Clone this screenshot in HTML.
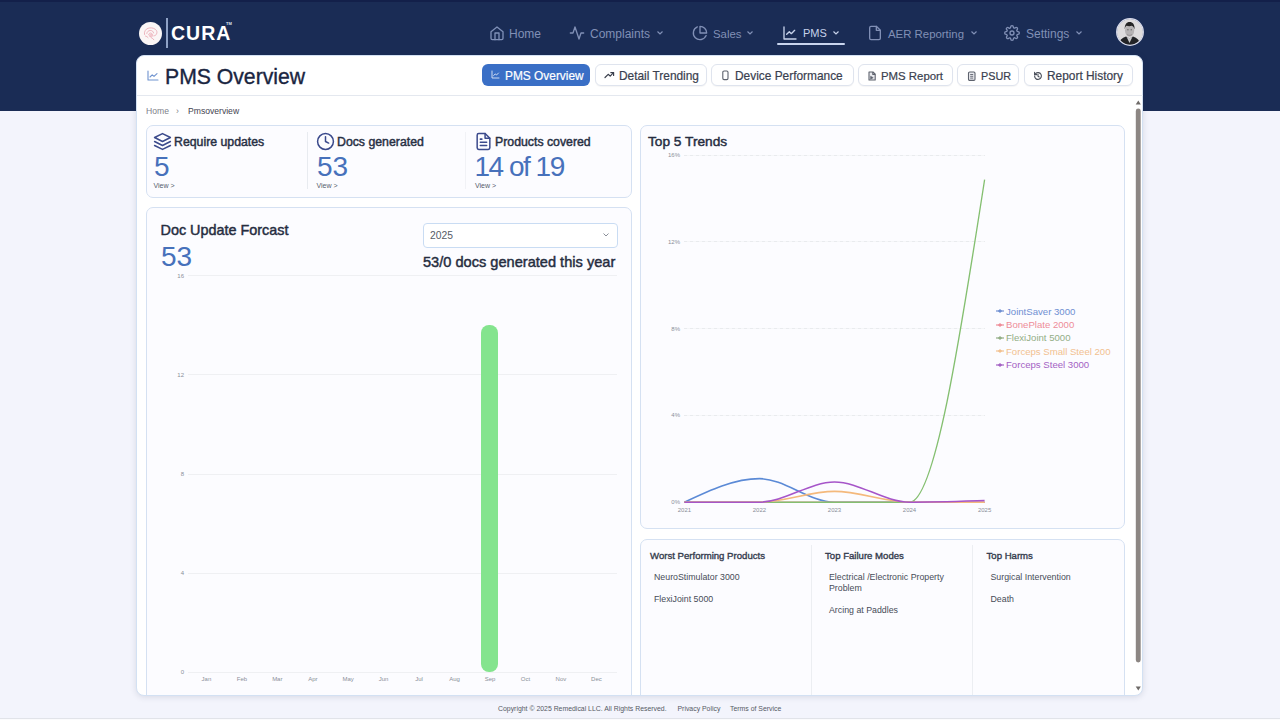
<!DOCTYPE html>
<html><head><meta charset="utf-8">
<style>
*{box-sizing:border-box;margin:0;padding:0}
html,body{width:1280px;height:720px;overflow:hidden}
body{background:#f3f4fc;font-family:"Liberation Sans",sans-serif;position:relative}
.a{position:absolute}
.t{position:absolute;white-space:nowrap;line-height:1}
#band{left:0;top:0;width:1280px;height:111px;background:#1a2c55;border-top:2px solid #13204a}
.nav{color:#8190b6;font-size:12px}
.nav svg{position:absolute}
#card{left:136px;top:55px;width:1007px;height:641px;background:#fff;border-radius:8px;border:1px solid #d3e1f3;box-shadow:0 1px 6px rgba(30,40,70,.13)}
.tab{position:absolute;top:64px;height:22px;border:1px solid #dfe4ee;border-radius:6px;background:#fff;box-shadow:0 1px 1px rgba(0,0,0,.04)}
.tabt{font-size:11.9px;color:#3b4150;margin-top:1.8px;-webkit-text-stroke:0.2px #383e4d}
.box{position:absolute;background:#fcfcff;border:1px solid #d5e1f2;border-radius:7px}
.lbl{font-size:12.3px;color:#283044;-webkit-text-stroke:0.45px #283044}
.big{font-size:28px;color:#4771bb}
.view{font-size:7px;color:#555d6e}
.ax{font-size:6px;color:#8a8f99}
.grid{position:absolute;height:1px;background:#eff0f3}
.dgrid{position:absolute;height:1px;background:repeating-linear-gradient(90deg,#e9ebee 0 3px,#f5f6f8 3px 6px)}
.leg{font-size:9.6px}
.bt{font-size:8.8px;color:#474c58}
.bh{font-size:9.6px;color:#343b4d;-webkit-text-stroke:0.35px #343b4d}
</style></head>
<body>
<div id="band" class="a"></div>

<!-- logo -->
<div class="a" style="left:139px;top:22px;width:23px;height:23px;border-radius:50%;background:#fbf6f6"></div>
<svg class="a" style="left:139px;top:22px" width="23" height="23" viewBox="0 0 23 23">
 <g fill="none" stroke="#eaa3ae" stroke-width="0.8" stroke-linecap="round">
  <path d="M5.5 12.5c-.6-2.8 1-5.4 3.6-6.2 2.4-.8 5.2-.5 7.2 1 1.6 1.2 2 3 1.3 4.6-.5 1.2-1.6 1.8-2.7 2"/>
  <path d="M7.8 11.5c.2-1.8 1.6-2.9 3.4-3 1.8-.1 3.2.9 3.4 2.4"/>
  <path d="M9.6 12.4c.4-1 1.3-1.5 2.3-1.3 1 .2 1.5 1 1.4 1.9"/>
  <path d="M6.5 14c1 .2 2 .8 2.6 1.6"/>
  <path d="M11 14c.6 1.2 1.6 2.2 2.8 2.6l1 1.2"/>
 </g>
 <ellipse cx="12" cy="13.5" rx="2.2" ry="1.8" fill="#f0b8c0" opacity="0.7"/>
</svg>
<div class="a" style="left:166px;top:18px;width:2px;height:30px;background:#8fa2c6"></div>
<div class="t" style="left:171px;top:24px;font-size:19.5px;font-weight:bold;color:#fff;letter-spacing:1px">CURA</div>
<div class="t" style="left:226px;top:22px;font-size:4px;font-weight:bold;color:#dfe6f2">TM</div>

<!-- nav -->
<svg class="a" style="left:489px;top:25px" width="16" height="16" viewBox="0 0 24 24" fill="none" stroke="#7f90b8" stroke-width="2" stroke-linecap="round" stroke-linejoin="round"><path d="M3 10l9-7 9 7v10a2 2 0 0 1-2 2H5a2 2 0 0 1-2-2z"/><path d="M9 22V12h6v10"/></svg>
<div class="t nav" style="left:509px;top:28px">Home</div>

<svg class="a" style="left:569px;top:25px" width="16" height="16" viewBox="0 0 24 24" fill="none" stroke="#8190b6" stroke-width="2" stroke-linecap="round" stroke-linejoin="round"><path d="M22 12h-4l-3 9L9 3l-3 9H2"/></svg>
<div class="t nav" style="left:590px;top:28px">Complaints</div>
<svg class="a" style="left:656px;top:30px" width="8" height="6" viewBox="0 0 8 6" fill="none" stroke="#8190b6" stroke-width="1.2"><path d="M1.5 1.5L4 4l2.5-2.5"/></svg>

<svg class="a" style="left:692px;top:25px" width="16" height="16" viewBox="0 0 24 24" fill="none" stroke="#8190b6" stroke-width="2" stroke-linecap="round" stroke-linejoin="round"><path d="M21.2 15.9A10 10 0 1 1 8 2.8"/><path d="M22 12A10 10 0 0 0 12 2v10z"/></svg>
<div class="t nav" style="left:713px;top:28px;font-size:11.4px;top:28.5px">Sales</div>
<svg class="a" style="left:746px;top:30px" width="8" height="6" viewBox="0 0 8 6" fill="none" stroke="#8190b6" stroke-width="1.2"><path d="M1.5 1.5L4 4l2.5-2.5"/></svg>

<svg class="a" style="left:782px;top:25px" width="16" height="16" viewBox="0 0 24 24" fill="none" stroke="#c7d2ea" stroke-width="2" stroke-linecap="round" stroke-linejoin="round"><path d="M3 3v18h18"/><path d="M7 14l4-4 3 3 5-5"/></svg>
<div class="t nav" style="left:803px;top:28px;color:#c7d2ea;font-size:11px">PMS</div>
<svg class="a" style="left:832px;top:30px" width="8" height="6" viewBox="0 0 8 6" fill="none" stroke="#c7d2ea" stroke-width="1.2"><path d="M1.5 1.5L4 4l2.5-2.5"/></svg>
<div class="a" style="left:777px;top:43px;width:68px;height:2px;background:#c9d5ee;border-radius:1px"></div>

<svg class="a" style="left:867px;top:25px" width="16" height="16" viewBox="0 0 24 24" fill="none" stroke="#8190b6" stroke-width="2" stroke-linecap="round" stroke-linejoin="round"><path d="M14 2H6a2 2 0 0 0-2 2v16a2 2 0 0 0 2 2h12a2 2 0 0 0 2-2V8z"/><path d="M14 2v6h6"/></svg>
<div class="t nav" style="left:888px;top:28px;font-size:11.4px;top:28.5px">AER Reporting</div>
<svg class="a" style="left:970px;top:30px" width="8" height="6" viewBox="0 0 8 6" fill="none" stroke="#8190b6" stroke-width="1.2"><path d="M1.5 1.5L4 4l2.5-2.5"/></svg>

<svg class="a" style="left:1004px;top:25px" width="16" height="16" viewBox="0 0 24 24" fill="none" stroke="#8190b6" stroke-width="2" stroke-linecap="round" stroke-linejoin="round"><circle cx="12" cy="12" r="3"/><path d="M19.4 15a1.65 1.65 0 0 0 .33 1.82l.06.06a2 2 0 1 1-2.83 2.83l-.06-.06a1.65 1.65 0 0 0-1.82-.33 1.65 1.65 0 0 0-1 1.51V21a2 2 0 1 1-4 0v-.09A1.65 1.65 0 0 0 9 19.4a1.65 1.65 0 0 0-1.82.33l-.06.06a2 2 0 1 1-2.83-2.83l.06-.06A1.65 1.65 0 0 0 4.6 15a1.65 1.65 0 0 0-1.51-1H3a2 2 0 1 1 0-4h.09A1.65 1.65 0 0 0 4.6 9a1.65 1.65 0 0 0-.33-1.82l-.06-.06a2 2 0 1 1 2.83-2.83l.06.06A1.65 1.65 0 0 0 9 4.6a1.65 1.65 0 0 0 1-1.51V3a2 2 0 1 1 4 0v.09a1.65 1.65 0 0 0 1 1.51 1.65 1.65 0 0 0 1.82-.33l.06-.06a2 2 0 1 1 2.83 2.83l-.06.06A1.65 1.65 0 0 0 19.4 9a1.65 1.65 0 0 0 1.51 1H21a2 2 0 1 1 0 4h-.09a1.65 1.65 0 0 0-1.51 1z"/></svg>
<div class="t nav" style="left:1026px;top:28px">Settings</div>
<svg class="a" style="left:1075px;top:30px" width="8" height="6" viewBox="0 0 8 6" fill="none" stroke="#8190b6" stroke-width="1.2"><path d="M1.5 1.5L4 4l2.5-2.5"/></svg>

<!-- avatar -->
<svg class="a" style="left:1116px;top:17.5px" width="28" height="28" viewBox="0 0 28 28">
 <defs><clipPath id="av"><circle cx="14" cy="14" r="13"/></clipPath></defs>
 <g clip-path="url(#av)">
  <rect width="28" height="28" fill="#dedcdd"/>
  <path d="M2 28c1-5 3.5-8 8-9.5l3.5 2 3.5-2c4.5 1.5 7 4.5 8 9.5z" fill="#222326"/>
  <path d="M10.5 18.7l3 6.3 3-6.3-3 1.5z" fill="#c9c9cb"/>
  <ellipse cx="13.6" cy="12.6" rx="4.6" ry="6.2" fill="#b6b3b4"/>
  <path d="M11 16.5c1.5 1.2 3.5 1.2 5 0" stroke="#8d898a" stroke-width="0.8" fill="none"/>
  <ellipse cx="11.9" cy="11.8" rx="0.8" ry="0.5" fill="#555"/>
  <ellipse cx="15.3" cy="11.8" rx="0.8" ry="0.5" fill="#555"/>
  <path d="M8.8 11.5c-.4-5 1.8-7.6 4.8-7.6s5.4 2.4 4.9 7.6c-.6-2.2-1.4-3.4-2.6-3.7-1.8.6-3.6.6-5.2 0-1.2.4-1.6 1.6-1.9 3.7z" fill="#242424"/>
 </g>
 <circle cx="14" cy="14" r="13.3" fill="none" stroke="#d9dcec" stroke-width="1.3"/>
</svg>

<!-- main card -->
<div id="card" class="a"></div>
<svg class="a" style="left:147px;top:70px" width="12" height="11" viewBox="0 0 12 11" fill="none" stroke="#6f93cf" stroke-width="1.1" stroke-linecap="round" stroke-linejoin="round"><path d="M1 1v9h10"/><path d="M3 7l2.2-2.2 1.8 1.6L10 3.6"/></svg>
<div class="t" style="left:165px;top:66px;font-size:21.2px;color:#1a2541;-webkit-text-stroke:0.35px #1a2541">PMS Overview</div>

<!-- tabs -->
<div class="a" style="left:482px;top:64px;width:108px;height:22px;background:#3a6fc6;border-radius:6px"></div>
<svg class="a" style="left:491px;top:70px" width="9" height="9" viewBox="0 0 9 9" fill="none" stroke="#dfe8f7" stroke-width="0.9" stroke-linecap="round"><path d="M1 1v7h7"/><path d="M2.6 5.5l1.6-1.5 1.3 1L7.5 3"/></svg>
<div class="t tabt" style="left:505px;top:68.8px;color:#fff;-webkit-text-stroke:0.2px #fff">PMS Overview</div>

<div class="tab" style="left:595px;width:112px"></div>
<svg class="a" style="left:604px;top:71px" width="11" height="8" viewBox="0 0 11 8" fill="none" stroke="#3a3f4c" stroke-width="1.2" stroke-linecap="round" stroke-linejoin="round"><path d="M1 6.5l3.2-3.2 2 1.8 3.3-3.4"/><path d="M6.8 1.6h2.8v2.8"/></svg>
<div class="t tabt" style="left:619px;top:69px">Detail Trending</div>

<div class="tab" style="left:711px;width:143px"></div>
<svg class="a" style="left:721px;top:70px" width="9" height="11" viewBox="0 0 9 11" fill="none" stroke="#5d626d" stroke-width="1.1"><rect x="1.8" y="1" width="5.2" height="8.6" rx="1.3"/></svg>
<div class="t tabt" style="left:735px;top:69px">Device Performance</div>

<div class="tab" style="left:858px;width:95px"></div>
<svg class="a" style="left:867px;top:70.5px" width="10" height="10" viewBox="0 0 10 10" fill="none" stroke="#5d626d" stroke-width="1.1" stroke-linejoin="round"><path d="M2 1h4l2.2 2.2V9H2z" fill="#e9eaee"/><path d="M5.8 1v2.4h2.4"/><path d="M3.6 5.2l2.6 1.5-2.6 1.5z" fill="#5d626d" stroke-width="0.6"/></svg>
<div class="t tabt" style="left:881px;top:69px;font-size:11.4px;top:69.4px">PMS Report</div>

<div class="tab" style="left:957px;width:62px"></div>
<svg class="a" style="left:967px;top:70.5px" width="10" height="10" viewBox="0 0 10 10" fill="none" stroke="#5d626d" stroke-width="1.1"><rect x="1.5" y="1" width="6.5" height="8.4" rx="1.2" fill="#e9eaee"/><path d="M3.2 3.5h3M3.2 5.3h3M3.2 7.1h3" stroke-width="0.9"/></svg>
<div class="t tabt" style="left:981px;font-size:10.8px;top:68.8px">PSUR</div>

<div class="tab" style="left:1024px;width:109px"></div>
<svg class="a" style="left:1033px;top:71px" width="10" height="10" viewBox="0 0 10 10" fill="none" stroke="#4a4f5a" stroke-width="1.1" stroke-linecap="round" stroke-linejoin="round"><path d="M1.6 5a3.4 3.4 0 1 0 1-2.4L1.6 3.6"/><path d="M1.6 1.4v2.2h2.2"/><path d="M5 3.4V5.2l1.2 .7"/></svg>
<div class="t tabt" style="left:1047px;top:69px">Report History</div>

<div class="a" style="left:137px;top:95px;width:1006px;height:1px;background:#e4e8ef"></div>

<!-- breadcrumb -->
<div class="t" style="left:146px;top:107px;font-size:8.6px;color:#7d818a">Home</div>
<div class="t" style="left:176px;top:107px;font-size:8.6px;color:#7d818a">&#8250;</div>
<div class="t" style="left:188px;top:107px;font-size:8.6px;color:#3f4350">Pmsoverview</div>


<!-- scroll area -->
<div class="a" style="left:137px;top:96px;width:1006px;height:599px;overflow:hidden;border-radius:0 0 8px 8px">
<div class="a" style="left:-137px;top:-96px;width:1280px;height:720px">

<!-- stats box -->
<div class="box" style="left:146px;top:125px;width:486px;height:73px"></div>
<div class="a" style="left:307px;top:132px;width:1px;height:57px;background:#e8ebf0"></div>
<div class="a" style="left:465px;top:132px;width:1px;height:57px;background:#f1f2f6"></div>

<svg class="a" style="left:153px;top:132px" width="19" height="19" viewBox="0 0 24 24" fill="none" stroke="#3b4a8c" stroke-width="1.9" stroke-linecap="round" stroke-linejoin="round"><path d="M12 2L2 7l10 5 10-5z"/><path d="M2 17l10 5 10-5"/><path d="M2 12l10 5 10-5"/></svg>
<div class="t lbl" style="left:174px;top:135.5px">Require updates</div>
<div class="t big" style="left:154px;top:153px">5</div>
<div class="t view" style="left:153.5px;top:182px">View &gt;</div>

<svg class="a" style="left:316px;top:132px" width="19" height="19" viewBox="0 0 24 24" fill="none" stroke="#3b4a8c" stroke-width="1.9" stroke-linecap="round" stroke-linejoin="round"><circle cx="12" cy="12" r="10"/><path d="M12 6v6l4 2"/></svg>
<div class="t lbl" style="left:337px;top:135.5px">Docs generated</div>
<div class="t big" style="left:317px;top:153px">53</div>
<div class="t view" style="left:316.5px;top:182px">View &gt;</div>

<svg class="a" style="left:474px;top:132px" width="19" height="19" viewBox="0 0 24 24" fill="none" stroke="#3b4a8c" stroke-width="1.9" stroke-linecap="round" stroke-linejoin="round"><path d="M14 2H6a2 2 0 0 0-2 2v16a2 2 0 0 0 2 2h12a2 2 0 0 0 2-2V8z"/><path d="M14 2v6h6"/><path d="M16 13H8M16 17H8M10 9H8"/></svg>
<div class="t lbl" style="left:495px;top:135.5px">Products covered</div>
<div class="t big" style="left:474.5px;top:153px;letter-spacing:-1.5px">14 of 19</div>
<div class="t view" style="left:475px;top:182px">View &gt;</div>

<!-- doc forecast -->
<div class="box" style="left:146px;top:207px;width:486px;height:520px"></div>
<div class="t" style="left:160.5px;top:223.3px;font-size:14.4px;color:#262d3f;-webkit-text-stroke:0.45px #262d3f">Doc Update Forcast</div>
<div class="t big" style="left:161px;top:243px">53</div>
<div class="a" style="left:423px;top:223px;width:195px;height:25px;background:#fff;border:1px solid #c9dcf3;border-radius:4px"></div>
<div class="t" style="left:430px;top:231px;font-size:10.3px;color:#555b66">2025</div>
<svg class="a" style="left:602px;top:232px" width="8" height="6" viewBox="0 0 8 6" fill="none" stroke="#8a8f99" stroke-width="1"><path d="M1.5 1.5L4 4l2.5-2.5"/></svg>
<div class="t" style="left:423px;top:254.5px;font-size:14.6px;color:#262d3f;-webkit-text-stroke:0.45px #262d3f">53/0 docs generated this year</div>

<div class="grid" style="left:188px;top:275px;width:429px"></div>
<div class="grid" style="left:188px;top:374px;width:429px"></div>
<div class="grid" style="left:188px;top:473.5px;width:429px"></div>
<div class="grid" style="left:188px;top:572.5px;width:429px"></div>
<div class="grid" style="left:188px;top:672px;width:429px"></div>
<div class="t ax" style="left:174px;top:273px;width:10px;text-align:right">16</div>
<div class="t ax" style="left:174px;top:371.5px;width:10px;text-align:right">12</div>
<div class="t ax" style="left:174px;top:470.5px;width:10px;text-align:right">8</div>
<div class="t ax" style="left:174px;top:569.5px;width:10px;text-align:right">4</div>
<div class="t ax" style="left:174px;top:668.5px;width:10px;text-align:right">0</div>
<div class="a" style="left:481px;top:324.5px;width:16.5px;height:347.5px;background:#84e48e;border-radius:8px"></div>
<div class="t ax" style="left:191.4px;top:675.5px;width:30px;text-align:center">Jan</div>
<div class="t ax" style="left:226.9px;top:675.5px;width:30px;text-align:center">Feb</div>
<div class="t ax" style="left:262.3px;top:675.5px;width:30px;text-align:center">Mar</div>
<div class="t ax" style="left:297.8px;top:675.5px;width:30px;text-align:center">Apr</div>
<div class="t ax" style="left:333.2px;top:675.5px;width:30px;text-align:center">May</div>
<div class="t ax" style="left:368.6px;top:675.5px;width:30px;text-align:center">Jun</div>
<div class="t ax" style="left:404.1px;top:675.5px;width:30px;text-align:center">Jul</div>
<div class="t ax" style="left:439.6px;top:675.5px;width:30px;text-align:center">Aug</div>
<div class="t ax" style="left:475.0px;top:675.5px;width:30px;text-align:center">Sep</div>
<div class="t ax" style="left:510.5px;top:675.5px;width:30px;text-align:center">Oct</div>
<div class="t ax" style="left:545.9px;top:675.5px;width:30px;text-align:center">Nov</div>
<div class="t ax" style="left:581.4px;top:675.5px;width:30px;text-align:center">Dec</div>


<!-- top 5 trends -->
<div class="box" style="left:640px;top:125px;width:485px;height:404px"></div>
<div class="t" style="left:648px;top:135.3px;font-size:13.7px;color:#262d3f;-webkit-text-stroke:0.45px #262d3f">Top 5 Trends</div>
<div class="dgrid" style="left:684px;top:154.5px;width:301px"></div>
<div class="t ax" style="left:660px;top:152.0px;width:20px;text-align:right">16%</div>
<div class="dgrid" style="left:684px;top:241.3px;width:301px"></div>
<div class="t ax" style="left:660px;top:238.8px;width:20px;text-align:right">12%</div>
<div class="dgrid" style="left:684px;top:328.1px;width:301px"></div>
<div class="t ax" style="left:660px;top:325.6px;width:20px;text-align:right">8%</div>
<div class="dgrid" style="left:684px;top:414.9px;width:301px"></div>
<div class="t ax" style="left:660px;top:412.4px;width:20px;text-align:right">4%</div>
<div class="dgrid" style="left:684px;top:501.7px;width:301px"></div>
<div class="t ax" style="left:660px;top:499.2px;width:20px;text-align:right">0%</div>
<div class="t ax" style="left:669.4px;top:506.5px;width:30px;text-align:center">2021</div>
<div class="t ax" style="left:744.4px;top:506.5px;width:30px;text-align:center">2022</div>
<div class="t ax" style="left:819.5px;top:506.5px;width:30px;text-align:center">2023</div>
<div class="t ax" style="left:894.5px;top:506.5px;width:30px;text-align:center">2024</div>
<div class="t ax" style="left:969.6px;top:506.5px;width:30px;text-align:center">2025</div>

<svg class="a" style="left:0;top:0" width="1280" height="720" viewBox="0 0 1280 720" fill="none" stroke-width="1.6">
<path stroke="#5b8ad6" d="M684.4 502.2 C709.4 490.4 734.4 478.6 759.4 478.6 C784.5 478.6 809.5 502.2 834.5 502.2 C859.5 502.2 884.5 502.2 909.5 502.2 C934.6 502.2 959.6 502.2 984.6 502.2"/>
<path stroke="#f28b9c" d="M684.4 502.2 L984.6 502.2"/>
<path stroke="#84bf70" stroke-width="1.35" d="M684.4 502.2 C709.4 502.2 734.4 502.2 759.4 502.2 C784.5 502.2 809.5 502.2 834.5 502.2 C859.5 502.2 884.5 502.2 909.5 502.2 C934.6 502.2 959.6 340.9 984.6 179.7"/>
<path stroke="#f4b97c" d="M684.4 502.2 C709.4 502.2 734.4 502.2 759.4 502.2 C784.5 502.2 809.5 491.4 834.5 491.4 C859.5 491.4 884.5 502.2 909.5 502.2 C934.6 502.2 959.6 502.2 984.6 502.2"/>
<path stroke="#a655c9" d="M684.4 502.2 C709.4 502.2 734.4 502.2 759.4 502.2 C784.5 502.2 809.5 482.0 834.5 482.0 C859.5 482.0 884.5 502.2 909.5 502.2 C934.6 502.2 959.6 501.3 984.6 500.5"/>
</svg>
<svg class="a" style="left:996px;top:308.4px" width="8" height="6" viewBox="0 0 8 6"><path d="M0 3H8" stroke="#6f8fd2" stroke-width="1.2"/><path d="M4 1L6.2 3L4 5L1.8 3z" fill="#6f8fd2"/></svg>
<div class="t leg" style="left:1006px;top:306.8px;color:#6f8fd2">JointSaver 3000</div>
<svg class="a" style="left:996px;top:321.7px" width="8" height="6" viewBox="0 0 8 6"><path d="M0 3H8" stroke="#ee8d99" stroke-width="1.2"/><path d="M4 1L6.2 3L4 5L1.8 3z" fill="#ee8d99"/></svg>
<div class="t leg" style="left:1006px;top:320.1px;color:#ee8d99">BonePlate 2000</div>
<svg class="a" style="left:996px;top:335.0px" width="8" height="6" viewBox="0 0 8 6"><path d="M0 3H8" stroke="#93ae86" stroke-width="1.2"/><path d="M4 1L6.2 3L4 5L1.8 3z" fill="#93ae86"/></svg>
<div class="t leg" style="left:1006px;top:333.4px;color:#93ae86">FlexiJoint 5000</div>
<svg class="a" style="left:996px;top:348.3px" width="8" height="6" viewBox="0 0 8 6"><path d="M0 3H8" stroke="#f2c190" stroke-width="1.2"/><path d="M4 1L6.2 3L4 5L1.8 3z" fill="#f2c190"/></svg>
<div class="t leg" style="left:1006px;top:346.7px;color:#f2c190">Forceps Small Steel 200</div>
<svg class="a" style="left:996px;top:361.6px" width="8" height="6" viewBox="0 0 8 6"><path d="M0 3H8" stroke="#a462c4" stroke-width="1.2"/><path d="M4 1L6.2 3L4 5L1.8 3z" fill="#a462c4"/></svg>
<div class="t leg" style="left:1006px;top:360.0px;color:#a462c4">Forceps Steel 3000</div>


<!-- bottom panel -->
<div class="box" style="left:640px;top:538.5px;width:485px;height:200px"></div>
<div class="a" style="left:811px;top:545px;width:1px;height:160px;background:#eceef2"></div>
<div class="a" style="left:972px;top:545px;width:1px;height:160px;background:#eceef2"></div>
<div class="t bh" style="left:650px;top:551px">Worst Performing Products</div>
<div class="t bt" style="left:654px;top:572.5px">NeuroStimulator 3000</div>
<div class="t bt" style="left:654px;top:594.5px">FlexiJoint 5000</div>
<div class="t bh" style="left:825px;top:551px">Top Failure Modes</div>
<div class="t bt" style="left:829px;top:572.5px">Electrical /Electronic Property</div>
<div class="t bt" style="left:829px;top:583.5px">Problem</div>
<div class="t bt" style="left:829px;top:605.5px">Arcing at Paddles</div>
<div class="t bh" style="left:986.5px;top:551px">Top Harms</div>
<div class="t bt" style="left:990.5px;top:572.5px">Surgical Intervention</div>
<div class="t bt" style="left:990.5px;top:594.5px">Death</div>

</div></div>

<!-- scrollbar -->
<svg class="a" style="left:1134px;top:96px" width="9" height="599" viewBox="0 0 9 599">
 <path d="M1.7 8.6 L4.3 4.4 L6.8 8.6z" fill="#6e6a68"/>
 <rect x="1.8" y="12.5" width="4.9" height="554" rx="2.45" fill="#8c8683"/>
 <path d="M1.7 590.5 L4.3 594.5 L6.8 590.5z" fill="#6e6a68"/>
</svg>

<!-- footer -->
<div class="t" style="left:498px;top:705.5px;font-size:6.9px;color:#555a64">Copyright &copy; 2025 Remedical LLC. All Rights Reserved.</div>
<div class="t" style="left:677.5px;top:705.5px;font-size:6.9px;color:#555a64">Privacy Policy</div>
<div class="t" style="left:730px;top:705.5px;font-size:6.9px;color:#555a64">Terms of Service</div>
<div class="a" style="left:0;top:717.5px;width:1280px;height:1.5px;background:#e1e3e9"></div><div class="a" style="left:0;top:719px;width:1280px;height:1px;background:#fbfbfd"></div>
</body></html>
